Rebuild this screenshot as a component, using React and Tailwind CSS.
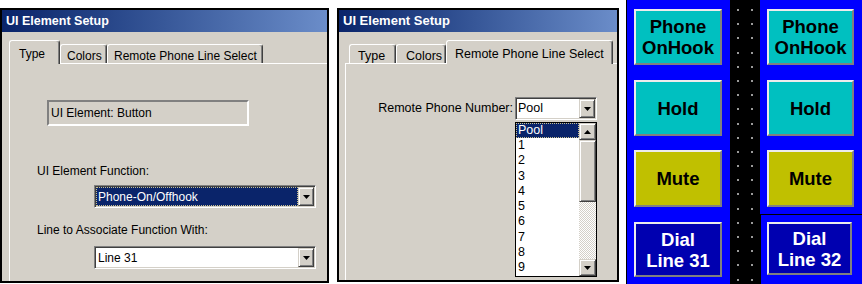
import React from "react";

const WIN = "font-['Liberation_Sans',Arial,sans-serif]";

function Tri({ up = false }) {
  return (
    <svg width="7" height="4" viewBox="0 0 7 4" className="block">
      {up ? <path d="M0 4h7L3.5 0z" fill="#000" /> : <path d="M0 0h7L3.5 4z" fill="#000" />}
    </svg>
  );
}

function RaisedBtn({ className = "", children }) {
  return (
    <div
      className={`bg-[#d4d0c8] border border-t-[#d4d0c8] border-l-[#d4d0c8] border-b-[#404040] border-r-[#404040] shadow-[inset_1px_1px_#ffffff,inset_-1px_-1px_#808080] flex items-center justify-center ${className}`}
    >
      {children}
    </div>
  );
}

function Tab({ selected, w, pl, size, children }) {
  const base = `relative flex items-start shrink-0 bg-[#d4d0c8] border-l border-t border-white border-r border-r-[#404040] rounded-tl-[3px] rounded-tr-[3px] shadow-[inset_-1px_0_#808080] ${WIN} text-black`;
  return selected ? (
    <div className={`${base} z-10 h-[24px] -mb-[1px] pt-[4px]`} style={{ width: w, paddingLeft: pl, fontSize: size }}>
      {children}
    </div>
  ) : (
    <div className={`${base} h-[19px] pt-[2px]`} style={{ width: w, paddingLeft: pl, fontSize: size }}>
      {children}
    </div>
  );
}

function Field({ w, children }) {
  return (
    <div
      className="h-[23px] border border-t-[#808080] border-l-[#808080] border-b-white border-r-white shadow-[inset_1px_1px_#404040,inset_-1px_-1px_#d4d0c8] p-[1px] bg-white flex shrink-0"
      style={{ width: w }}
    >
      <div className="flex-1 min-w-0 flex">{children}</div>
      <RaisedBtn className="h-full w-[16px] shrink-0">
        <Tri />
      </RaisedBtn>
    </div>
  );
}

function TitleBar({ size }) {
  return (
    <div
      className={`h-[22px] shrink-0 bg-gradient-to-r from-[#0a246a] to-[#6b8dc9] flex items-center pl-[4px] text-white font-bold ${WIN}`}
      style={{ fontSize: size }}
    >
      UI Element Setup
    </div>
  );
}

function Panel1() {
  return (
    <div className="mt-[8px] w-[329px] h-[275px] border-2 border-black bg-[#d4d0c8] flex flex-col overflow-hidden shrink-0">
      <TitleBar size="12.5px" />
      <div className="flex-1 flex flex-col pl-[7px] pt-[8px] min-h-0">
        <div className="flex items-end h-[23px]">
          <Tab selected w={51} pl={9} size="12px">Type</Tab>
          <Tab w={47} pl={6} size="12px">Colors</Tab>
          <Tab w={156} pl={6} size="12px">Remote Phone Line Select</Tab>
        </div>
        <div className={`flex-1 border-t border-l border-white flex flex-col ${WIN} text-[12px] text-black`}>
          <div className="ml-[37px] mt-[36px] w-[202px] h-[26px] border-2 border-t-[#808080] border-l-[#808080] border-b-white border-r-white flex items-center pl-[2px]">
            UI Element: Button
          </div>
          <div className="ml-[27px] mt-[38px] h-[14px] leading-[14px]">UI Element Function:</div>
          <div className="ml-[84px] mt-[7px]">
            <Field w={222}>
              <div className="flex-1 bg-[#0a246a] border border-dotted border-[#c8c090] text-white flex items-center pl-[1px] leading-none">
                Phone-On/Offhook
              </div>
            </Field>
          </div>
          <div className="ml-[27px] mt-[15px] h-[14px] leading-[14px]">Line to Associate Function With:</div>
          <div className="ml-[84px] mt-[9px]">
            <Field w={222}>
              <div className="flex-1 flex items-center pl-[2px] leading-none">Line 31</div>
            </Field>
          </div>
        </div>
      </div>
    </div>
  );
}

function Panel2() {
  const items = ["1", "2", "3", "4", "5", "6", "7", "8", "9"];
  return (
    <div className="mt-[8px] ml-[8px] w-[282px] h-[274px] border-2 border-black bg-[#d4d0c8] flex flex-col overflow-hidden shrink-0">
      <TitleBar size="13px" />
      <div className="flex-1 flex flex-col pl-[6px] pt-[8px] min-h-0">
        <div className="flex items-end h-[23px]">
          <div className="w-[4px] shrink-0" />
          <Tab w={47} pl={8} size="12.5px">Type</Tab>
          <Tab w={50} pl={9} size="12.5px">Colors</Tab>
          <Tab selected w={167} pl={8} size="12.5px">Remote Phone Line Select</Tab>
        </div>
        <div className={`flex-1 border-t border-l border-white flex flex-col ${WIN} text-[12.5px] text-black`}>
          <div className="mt-[33px] ml-[31px] flex items-center">
            <div className="w-[136px] text-right whitespace-nowrap leading-none">Remote Phone Number:</div>
            <div className="ml-[2px] relative">
              <Field w={82}>
                <div className="flex-1 flex items-center pl-[1px] leading-none">Pool</div>
              </Field>
              <div className="absolute left-0 top-[25px] w-[82px] h-[155px] border border-black bg-white flex z-20">
                <div className="flex-1 flex flex-col">
                  <div className="h-[15px] bg-[#0a246a] border border-dotted border-[#c8c090] text-white pl-[1px] leading-[13px]">Pool</div>
                  {items.map((n) => (
                    <div key={n} className="h-[15.3px] pl-[2px] leading-[15px]">{n}</div>
                  ))}
                </div>
                <div className="w-[17px] flex flex-col">
                  <RaisedBtn className="h-[17px]"><Tri up /></RaisedBtn>
                  <RaisedBtn className="h-[62px]" />
                  <div className="flex-1 bg-[repeating-conic-gradient(#d4d0c8_0_25%,#ffffff_0_50%)] bg-[length:2px_2px]" />
                  <RaisedBtn className="h-[17px]"><Tri /></RaisedBtn>
                </div>
              </div>
            </div>
          </div>
        </div>
      </div>
    </div>
  );
}

function PhoneBtn({ color, text = "text-black", h, mt, w = 88, ml = 7, lines }) {
  return (
    <div
      className={`shrink-0 border-2 border-t-[#ececec] border-l-[#ececec] border-b-[#808080] border-r-[#808080] flex flex-col items-center justify-center font-bold text-[18.5px] leading-[21px] ${WIN} ${text}`}
      style={{ backgroundColor: color, height: h, marginTop: mt, width: w, marginLeft: ml }}
    >
      {lines.map((l) => (
        <div key={l}>{l}</div>
      ))}
    </div>
  );
}

function Dots() {
  const rows = Array.from({ length: 20 });
  return (
    <div className="w-[30px] h-full bg-black shrink-0 flex flex-col pt-[9px] gap-[12.2px]">
      {rows.map((_, i) => (
        <div key={i} className="flex h-[2px]">
          <div className="ml-[7px] w-[2px] h-[2px] bg-[#9a9a9a]" />
          <div className="ml-[12px] w-[2px] h-[2px] bg-[#9a9a9a]" />
        </div>
      ))}
    </div>
  );
}

function RightSection() {
  const cyan = "#00c0c0";
  const yellow = "#c0c000";
  const navy = "#0000b0";
  return (
    <div className="ml-[7px] w-[236px] h-[284px] flex shrink-0">
      <div className="w-[104px] h-full bg-[#0000ff] border-l border-black flex flex-col">
        <PhoneBtn color={cyan} h={56} mt={9} lines={["Phone", "OnHook"]} />
        <PhoneBtn color={cyan} h={56} mt={15} lines={["Hold"]} />
        <PhoneBtn color={yellow} h={57} mt={14} lines={["Mute"]} />
        <PhoneBtn color={navy} text="text-white" h={55} mt={15} lines={["Dial", "Line 31"]} />
      </div>
      <Dots />
      <div className="w-[102px] h-full flex flex-col">
        <div className="h-[214px] bg-[#0000ff] flex flex-col">
          <PhoneBtn color={cyan} h={56} mt={9} w={87} lines={["Phone", "OnHook"]} />
          <PhoneBtn color={cyan} h={56} mt={15} w={87} lines={["Hold"]} />
          <PhoneBtn color={yellow} h={57} mt={14} w={87} lines={["Mute"]} />
        </div>
        <div className="flex-1 bg-[#0000ff] border-t border-l border-black flex flex-col">
          <PhoneBtn color={navy} text="text-white" h={53} mt={7} w={85} ml={6} lines={["Dial", "Line 32"]} />
        </div>
      </div>
    </div>
  );
}

export default function App() {
  return (
    <div className="w-[862px] h-[284px] bg-white flex items-start overflow-hidden">
      <Panel1 />
      <Panel2 />
      <RightSection />
    </div>
  );
}
